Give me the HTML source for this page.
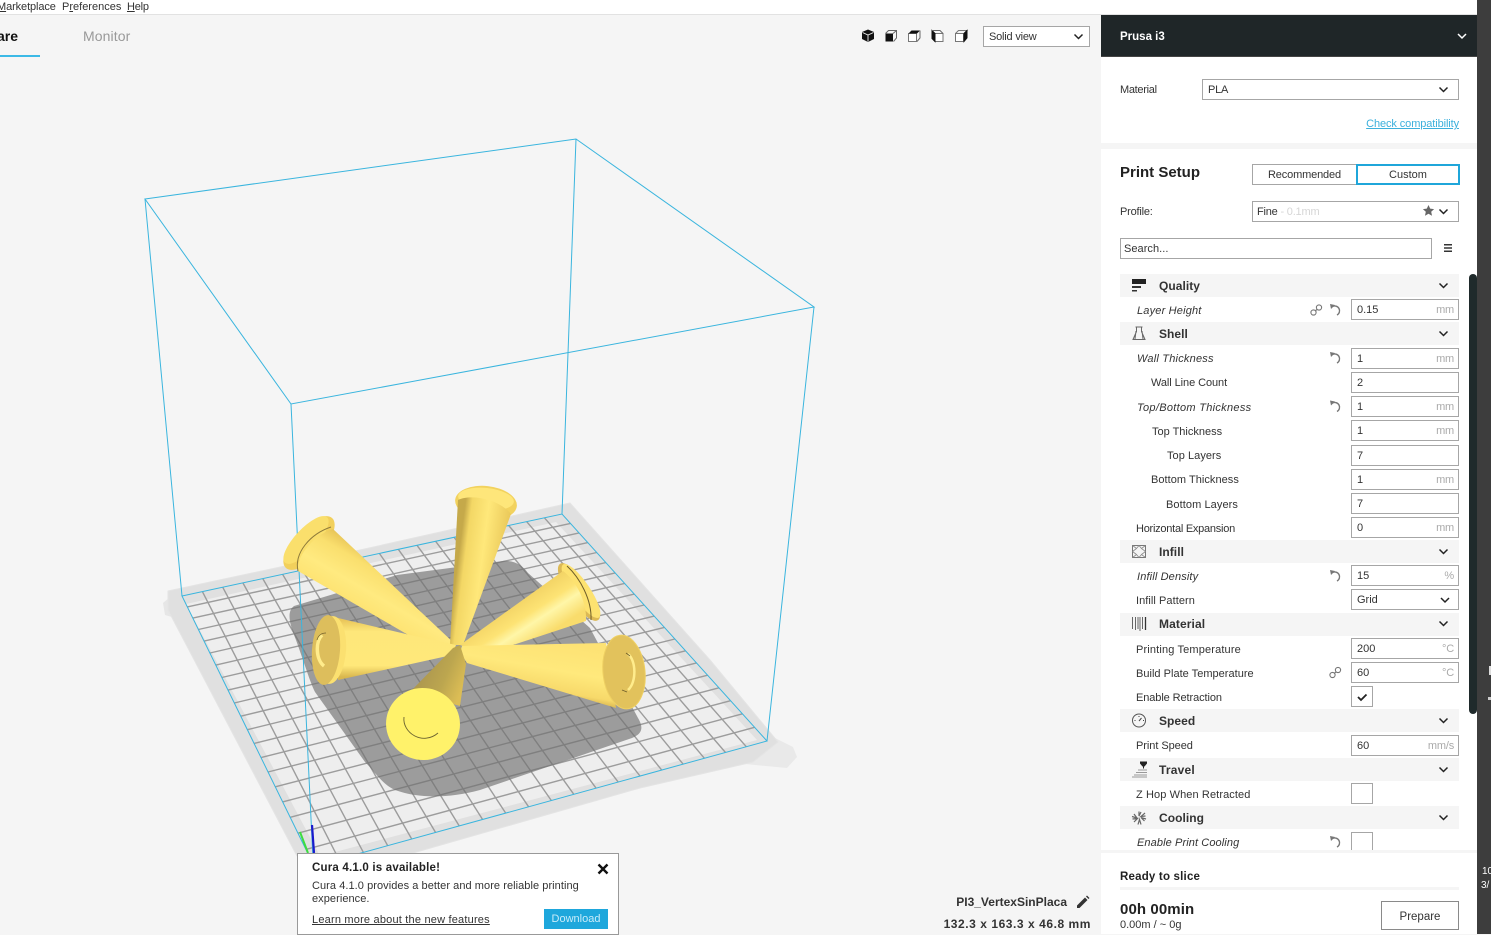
<!DOCTYPE html>
<html><head><meta charset="utf-8"><title>Cura</title>
<style>
html,body{margin:0;padding:0;width:1491px;height:934px;overflow:hidden;background:#f5f5f5;font-family:"Liberation Sans",sans-serif;color:#333}
div,span,svg{position:absolute;box-sizing:border-box}
.t{white-space:nowrap;font-size:11px;line-height:14px;letter-spacing:-.2px}
.l{white-space:nowrap;font-size:11px;line-height:14px;color:#333}
.it{font-style:italic}
.c{left:1120px;width:339px;height:23px;background:#f5f5f5}
.h{left:1159px;white-space:nowrap;font-size:12px;line-height:14px;font-weight:bold;color:#333;letter-spacing:.05px}
.i{left:1351px;width:108px;height:21px;border:1px solid #a6a6a6;background:#fff;font-size:11px;line-height:21px;padding-left:5px;color:#333}
.u{right:4px;top:0;color:#aaa;font-size:11px;line-height:21px;letter-spacing:-.2px}
.b{border:1px solid #a6a6a6;background:#fff}
</style></head><body>

<!-- viewport -->
<svg id="vp" width="1101" height="934" style="left:0;top:0" viewBox="0 0 1101 934">
<defs>
<linearGradient id="g1" gradientUnits="userSpaceOnUse" x1="372" y1="552" x2="344" y2="600"><stop offset="0" stop-color="#e8c558"/><stop offset=".25" stop-color="#fadf6e"/><stop offset=".65" stop-color="#ffea80"/><stop offset="1" stop-color="#fde372"/></linearGradient>
<linearGradient id="g2" gradientUnits="userSpaceOnUse" x1="458" y1="560" x2="505" y2="566"><stop offset="0" stop-color="#c5a94a"/><stop offset=".14" stop-color="#f3d765"/><stop offset=".5" stop-color="#ffe87a"/><stop offset="1" stop-color="#e9c758"/></linearGradient>
<linearGradient id="g3" gradientUnits="userSpaceOnUse" x1="515" y1="590" x2="545" y2="636"><stop offset="0" stop-color="#ecca5c"/><stop offset=".5" stop-color="#fde374"/><stop offset=".68" stop-color="#fff6a8"/><stop offset="1" stop-color="#f9dc6c"/></linearGradient>
<linearGradient id="g4" gradientUnits="userSpaceOnUse" x1="370" y1="620" x2="370" y2="677"><stop offset="0" stop-color="#e9c65a"/><stop offset=".2" stop-color="#fee77a"/><stop offset=".8" stop-color="#ffe87a"/><stop offset="1" stop-color="#d9b74e"/></linearGradient>
<linearGradient id="g5" gradientUnits="userSpaceOnUse" x1="550" y1="640" x2="540" y2="697"><stop offset="0" stop-color="#fde274"/><stop offset=".5" stop-color="#ffe97c"/><stop offset=".85" stop-color="#f7d96a"/><stop offset="1" stop-color="#d3b04c"/></linearGradient>
<linearGradient id="g6" gradientUnits="userSpaceOnUse" x1="415" y1="670" x2="462" y2="690"><stop offset="0" stop-color="#a8934f"/><stop offset=".6" stop-color="#bca64f"/><stop offset="1" stop-color="#dcbd55"/></linearGradient>
</defs>
<!-- plate -->
<path d="M170 597L163 603 165 615 175 618Z" fill="#e6e6e6"/>
<path d="M773 737L793 747 797 757 787 768 745 764Z" fill="#e9e9e9"/>
<path d="M168 591L360 550 570 503 710 660 778 742 753 762 640 788 413 853 297 856 168 610Z" fill="#e0e0e0" stroke="#e4e4e4" stroke-width="1" stroke-linejoin="round"/>
<path d="M186 604L556 522 757 740 320 856Z" fill="#eeeeee"/>
<g id="grid" stroke="#9c9c9c" stroke-width="1.400" fill="none"></g>
<!-- shadow -->
<path d="M294 606L397 575 503 561C515 560 523 566 528 573L590 628 638 718C644 728 642 734 632 738L480 790C450 798 420 799 395 790 382 784 375 772 365 762L315 692C310 682 305 665 296 640 290 625 286 612 294 606Z" fill="#707070" fill-opacity=".65"/>
<!-- wireframe -->
<g stroke="#3ab5de" stroke-width="1" fill="none">
<path d="M145 199L576 139 814 307 291 404Z"/>
<path d="M145 199L182 596M576 139L562 514M814 307L767 741M291 404L313 860"/>
<path d="M182 596L562 514 767 741 314 866Z"/>
</g>
<path d="M300 832L308 853" stroke="#3fdc3f" stroke-width="2"/>
<path d="M312 825L314 853" stroke="#1a1acc" stroke-width="2.200"/>

<!-- cone 1 upper-left -->
<ellipse cx="309" cy="543" rx="34" ry="15" transform="rotate(-47 309 543)" fill="#f2d05c"/>
<ellipse cx="306" cy="540" rx="31" ry="11" transform="rotate(-47 306 540)" fill="#fadf6c"/>
<path d="M333 529L456 645 452 650 410 636 298 571C295 560 312 535 333 529Z" fill="url(#g1)"/>
<path d="M298 571C294 553 310 534 331 527" stroke="#8d7a3a" stroke-width="1" fill="none"/>
<!-- cone 2 top -->
<ellipse cx="486" cy="503" rx="31" ry="17" transform="rotate(6 486 503)" fill="#f2d25e"/>
<ellipse cx="486" cy="499" rx="28" ry="11" transform="rotate(6 486 499)" fill="#fee67a"/>
<path d="M458 500C470 494 498 498 511 514L463 645 450 645Z" fill="url(#g2)"/>
<!-- cone 3 right-up -->
<ellipse cx="579" cy="592" rx="34" ry="11" transform="rotate(56 579 592)" fill="#dcb955"/>
<ellipse cx="581" cy="591" rx="32" ry="9" transform="rotate(56 581 591)" fill="#fde270"/>
<path d="M563 571C575 580 587 600 586 621L510 646 468 648 460 645Z" fill="url(#g3)"/>
<path d="M567 566C580 578 592 600 591 620" stroke="#6f5e2a" stroke-width="1" fill="none"/>
<!-- cone 4 left -->
<path d="M338 618L410 635 456 645 452 655 338 680Z" fill="url(#g4)"/>
<ellipse cx="331" cy="650" rx="15" ry="34" fill="#fbe070" transform="rotate(4 331 650)"/>
<ellipse cx="326" cy="650" rx="14" ry="35" fill="#ddbe5c" transform="rotate(4 326 650)"/>
<path d="M322 635C315 642 316 660 324 666" stroke="#ffec8c" stroke-width="3.500" fill="none"/>
<path d="M326 633C321 633 318 636 317 640" stroke="#6f5e2a" stroke-width=".8" fill="none"/>
<!-- cone 5 right -->
<path d="M606 643L462 646 460 652 467 663 616 708Z" fill="url(#g5)"/>
<ellipse cx="624" cy="672" rx="21" ry="37" fill="#e2c25c" transform="rotate(-6 624 672)" stroke="#efd062" stroke-width="1"/>
<path d="M628 654C636 660 637 682 628 690" stroke="#ffec8c" stroke-width="2.500" fill="none"/>
<path d="M626 653L630 656M622 690L627 692" stroke="#6f5e2a" stroke-width=".8" fill="none"/>
<!-- cone 6 front -->
<path d="M410 692L453 648 460 645 466 664 460 706Z" fill="url(#g6)"/>
<ellipse cx="423" cy="724" rx="37" ry="36" fill="#fff26a" transform="rotate(10 423 724)"/>
<path d="M404 717C402 733 423 746 438 733" stroke="#6b6330" stroke-width=".9" fill="none"/>
</svg>

<!-- menu -->
<div style="left:0;top:0;width:1477px;height:15px;background:#fff;border-bottom:1px solid #e2e2e2"></div>
<div class="t" style="left:-3px;top:0;letter-spacing:-.1px"><u>M</u>arketplace</div>
<div class="t" style="left:62px;top:0;letter-spacing:0"><span style="position:static">P</span><u>r</u>eferences</div>
<div class="t" style="left:127px;top:0"><u>H</u>elp</div>

<!-- tabs -->
<div style="right:1473px;top:28px;font-size:14px;line-height:17px;font-weight:bold;color:#111;white-space:nowrap">Prepare</div>
<div style="left:0;top:55px;width:40px;height:2px;background:#3cb9e6"></div>
<div style="left:83px;top:28px;font-size:14px;line-height:17px;color:#999;white-space:nowrap;letter-spacing:.1px">Monitor</div>

<!-- view combo -->
<div class="b" style="left:983px;top:26px;width:107px;height:21px"></div>
<div class="t" style="left:989px;top:30px">Solid view</div>

<!-- sidebar -->
<div style="left:1477px;top:0;width:14px;height:934px;background:#3d3d3d"></div>
<div style="left:1101px;top:15px;width:376px;height:128px;background:#fff"></div>
<div style="left:1101px;top:15px;width:376px;height:42px;background:#1f2628;border-bottom:1px solid #444"></div>
<div style="left:1120px;top:30px;color:#fff;font-size:11.500px;line-height:14px;font-weight:bold;white-space:nowrap">Prusa i3</div>
<div style="left:1101px;top:149px;width:376px;height:701px;background:#fff"></div>

<div class="t" style="left:1120px;top:83px;letter-spacing:-.3px">Material</div>
<div class="b" style="left:1202px;top:79px;width:257px;height:21px"></div>
<div class="t" style="left:1208px;top:83px">PLA</div>
<div class="t" style="right:32px;top:117px;color:#3cb0dc;text-decoration:underline;letter-spacing:-.1px">Check compatibility</div>

<div style="left:1120px;top:164px;font-size:15px;line-height:18px;font-weight:bold;color:#222;white-space:nowrap">Print Setup</div>
<div class="b" style="left:1252px;top:164px;width:105px;height:21px;text-align:center;font-size:11px;line-height:20px;color:#333;letter-spacing:-.15px">Recommended</div>
<div class="b" style="left:1356px;top:164px;width:104px;height:21px;border:2px solid #1fa6da;text-align:center;font-size:11px;line-height:18px;color:#333">Custom</div>
<div class="t" style="left:1120px;top:205px">Profile:</div>
<div class="b" style="left:1252px;top:201px;width:207px;height:21px"></div>
<div class="t" style="left:1257px;top:205px">Fine <span style="position:static;color:#d6d6d6">- 0.1mm</span></div>
<div class="b" style="left:1120px;top:238px;width:312px;height:21px"></div>
<div class="t" style="left:1124px;top:242px;letter-spacing:.05px">Search...</div>

<!-- settings -->
<div class="c" style="top:274px"></div><div class="h" style="top:279px">Quality</div>
<div class="l it" style="left:1137px;top:304px;letter-spacing:.18px">Layer Height</div>
<div class="i" style="top:299px">0.15<span class="u">mm</span></div>
<div class="c" style="top:322px"></div><div class="h" style="top:327px">Shell</div>
<div class="l it" style="left:1137px;top:352px;letter-spacing:.21px">Wall Thickness</div>
<div class="i" style="top:348px">1<span class="u">mm</span></div>
<div class="l" style="left:1151px;top:376px;letter-spacing:-.08px">Wall Line Count</div>
<div class="i" style="top:372px">2</div>
<div class="l it" style="left:1137px;top:401px;letter-spacing:.3px">Top/Bottom Thickness</div>
<div class="i" style="top:396px">1<span class="u">mm</span></div>
<div class="l" style="left:1152px;top:425px">Top Thickness</div>
<div class="i" style="top:420px">1<span class="u">mm</span></div>
<div class="l" style="left:1167px;top:449px;letter-spacing:.05px">Top Layers</div>
<div class="i" style="top:445px">7</div>
<div class="l" style="left:1151px;top:473px;letter-spacing:.04px">Bottom Thickness</div>
<div class="i" style="top:469px">1<span class="u">mm</span></div>
<div class="l" style="left:1166px;top:498px;letter-spacing:.08px">Bottom Layers</div>
<div class="i" style="top:493px">7</div>
<div class="l" style="left:1136px;top:522px;letter-spacing:-.25px">Horizontal Expansion</div>
<div class="i" style="top:517px">0<span class="u">mm</span></div>
<div class="c" style="top:540px"></div><div class="h" style="top:545px">Infill</div>
<div class="l it" style="left:1137px;top:570px;letter-spacing:.14px">Infill Density</div>
<div class="i" style="top:565px">15<span class="u">%</span></div>
<div class="l" style="left:1136px;top:594px;letter-spacing:.06px">Infill Pattern</div>
<div class="i" style="top:589px">Grid</div>
<div class="c" style="top:613px"></div><div class="h" style="top:617px;letter-spacing:.1px">Material</div>
<div class="l" style="left:1136px;top:643px;letter-spacing:.15px">Printing Temperature</div>
<div class="i" style="top:638px">200<span class="u">°C</span></div>
<div class="l" style="left:1136px;top:667px;letter-spacing:.02px">Build Plate Temperature</div>
<div class="i" style="top:662px">60<span class="u">°C</span></div>
<div class="l" style="left:1136px;top:691px;letter-spacing:-.09px">Enable Retraction</div>
<div class="i" style="top:686px;width:22px"></div>
<div class="c" style="top:709px"></div><div class="h" style="top:714px">Speed</div>
<div class="l" style="left:1136px;top:739px;letter-spacing:-.06px">Print Speed</div>
<div class="i" style="top:735px">60<span class="u">mm/s</span></div>
<div class="c" style="top:758px"></div><div class="h" style="top:763px;letter-spacing:.2px">Travel</div>
<div class="l" style="left:1136px;top:788px;letter-spacing:.1px">Z Hop When Retracted</div>
<div class="i" style="top:783px;width:22px"></div>
<div class="c" style="top:806px"></div><div class="h" style="top:811px">Cooling</div>
<div class="l it" style="left:1137px;top:836px;letter-spacing:.1px">Enable Print Cooling</div>
<div class="i" style="top:832px;width:22px;height:24px"></div>

<!-- scrollbar -->
<div style="left:1469px;top:274px;width:8px;height:440px;background:#1f2a2b;border-radius:4px"></div>

<!-- icon overlay -->
<svg width="1491" height="934" style="left:0;top:0" viewBox="0 0 1491 934" fill="none">
<!-- chevrons -->
<g stroke="#222" stroke-width="1.500">
<path d="M1074.500 34.500l4 4 4-4M1439.500 87.500l4 4 4-4M1439.500 209.500l4 4 4-4"/>
<path d="M1439.500 283.500l4 4 4-4M1439.500 331.500l4 4 4-4M1439.500 549.500l4 4 4-4M1441 598l4 4 4-4M1439.500 621.500l4 4 4-4M1439.500 718.500l4 4 4-4M1439.500 767.500l4 4 4-4M1439.500 815.500l4 4 4-4"/>
</g>
<path d="M1458 34l4 4 4-4" stroke="#fff" stroke-width="1.500"/>
<!-- star -->
<path d="M1428.500 205l1.700 3.600 3.900.5-2.900 2.700.8 3.900-3.500-2-3.500 2 .8-3.900-2.900-2.700 3.900-.5z" fill="#666"/>
<!-- hamburger -->
<path d="M1444 244.800h8M1444 248h8M1444 251.200h8" stroke="#333" stroke-width="1.500"/>
<!-- view cubes -->
<g>
<path d="M868 29.500l6 2.500v7l-6 3-6-3v-7z" fill="#111"/><path d="M862.500 32.500l5.500 2.500 5.500-2.500M868 35v6.500" stroke="#f5f5f5" stroke-width=".9"/>
<path d="M885.500 33.500h7.500v8h-7.500z" fill="#111"/><path d="M885.500 33.500l3-3h8v7.500l-3 3.500M893 33.500l3.500-3" stroke="#666"/>
<path d="M908.500 33.500h8v8h-8z" fill="#fff" stroke="#777"/><path d="M908.500 33.500l3-3h8.500l-3 3h-8z" fill="#111"/><path d="M920 30.500v7.500l-3 3.500" stroke="#666"/>
<path d="M935 33.500h8v8h-8z" fill="#fff" stroke="#777"/><path d="M932 30.500l3 3v8l-3-3z" fill="#111" stroke="#111"/><path d="M932 30.500h8l3 3" stroke="#666"/>
<path d="M955.500 33.500h8v8h-8z" fill="#fff" stroke="#777"/><path d="M955.500 33.500l3-3h8.500l-3 3" stroke="#777"/><path d="M967 30.500l-3 3v8l3-3.500z" fill="#111" stroke="#111"/>
</g>
<!-- quality icon -->
<path d="M1132 279h14v5h-14z" fill="#222"/><path d="M1132 286h9v2h-9zM1132 290h5v1.500h-5z" fill="#333"/>
<!-- shell icon -->
<path d="M1135.500 327h7M1136.500 327.500v4l-3.500 8h12l-3.500-8v-4M1136 331l-1 8M1142 331l1 8" stroke="#666"/>
<!-- infill icon -->
<path d="M1132.500 545.500h13v12h-13z" stroke="#777"/><path d="M1132.500 545.500l4 3 2.500-3 2.500 3 4-3M1132.500 557.500l4-3 2.500 3 2.500-3 4 3M1136.500 548.500l-4 3 4 3M1141.500 548.500l4 3-4 3" stroke="#888" stroke-width=".8"/>
<!-- material icon -->
<path d="M1132.500 617v12M1135.500 617v13M1138 617v12M1140 617v14M1142.500 617v12" stroke="#666" stroke-width="1"/><path d="M1145.500 617v13" stroke="#333" stroke-width="1.300"/>
<!-- speed icon -->
<circle cx="1139" cy="720.500" r="6.500" stroke="#555"/><path d="M1139 721l2.500-3M1134.500 720.500h1M1143 720.500h1M1139 716v1" stroke="#444"/>
<!-- travel icon -->
<path d="M1140 761.500h7v2l-2.500 3h-2l-2.500-3z" fill="#222"/><path d="M1143.500 766.500v2" stroke="#222"/>
<path d="M1138 770h9M1136 772.500h11M1134 775h13M1132 777h15" stroke="#999" stroke-width="1"/>
<!-- cooling icon -->
<g stroke="#666" stroke-width="1.200"><path d="M1139 811.500v4.500l2-4M1145 813l-4 3.500 4.500-.5M1146 819l-5-1.500 3.500 3.500M1141 824.500l-1.500-5-1.500 5M1134 822l3.500-3.500-5 .5M1132 816.500l5 1.500-3-4"/></g>
<!-- undo icons -->
<g stroke="#777" stroke-width="1.400">
<path d="M1332.500 306.500a4.700 4.700 0 1 1 4.500 8.500"/>
<path d="M1332.500 354.500a4.700 4.700 0 1 1 4.500 8.500"/>
<path d="M1332.500 403a4.700 4.700 0 1 1 4.500 8.500"/>
<path d="M1332.500 572.500a4.700 4.700 0 1 1 4.500 8.500"/>
<path d="M1332.500 838.500a4.700 4.700 0 1 1 4.500 8.500"/>
</g>
<g fill="#777"><path d="M1330 304l5 1-4 4zM1330 352l5 1-4 4zM1330 400.500l5 1-4 4zM1330 570l5 1-4 4zM1330 836l5 1-4 4z"/></g>
<!-- link icons -->
<g stroke="#777" stroke-width="1.100">
<circle cx="1319" cy="307.500" r="2.600"/><circle cx="1313.500" cy="312.500" r="2.600"/><path d="M1317 309.500l-2 1.500"/>
<circle cx="1338" cy="670" r="2.600"/><circle cx="1332.500" cy="675" r="2.600"/><path d="M1336 672l-2 1.500"/>
</g>
<!-- check -->
<path d="M1358 697l3 3 5.500-5.500" stroke="#222" stroke-width="1.800"/>
</svg>

<!-- bottom panel -->
<div style="left:1101px;top:850px;width:376px;height:3px;background:#f5f5f5"></div>
<div style="left:1101px;top:853px;width:376px;height:81px;background:#fff"></div>
<div style="left:1120px;top:870px;font-size:11.500px;line-height:14px;font-weight:bold;color:#222;white-space:nowrap;letter-spacing:.2px">Ready to slice</div>
<div style="left:1120px;top:887px;width:339px;height:3px;background:#f5f5f5"></div>
<div style="left:1120px;top:901px;font-size:15px;line-height:17px;font-weight:bold;color:#222;white-space:nowrap;letter-spacing:.1px">00h 00min</div>
<div class="t" style="left:1120px;top:918px;letter-spacing:0">0.00m / ~ 0g</div>
<div style="left:1381px;top:901px;width:78px;height:29px;border:1px solid #8a8a8a;background:#fff;text-align:center;font-size:11.500px;line-height:30px;color:#333">Prepare</div>

<!-- right edge fragments -->
<div style="left:1482px;top:866px;color:#fff;font-size:10px;line-height:12px;white-space:nowrap">10</div>
<div style="left:1481px;top:880px;color:#fff;font-size:10px;line-height:12px;white-space:nowrap">3/</div>
<div style="left:1489px;top:666px;width:2px;height:9px;background:#ddd"></div>
<div style="left:1488px;top:697px;width:3px;height:3px;background:#ccc"></div>

<!-- object info -->
<div style="right:424px;top:895px;font-size:12px;line-height:14px;font-weight:bold;color:#333;white-space:nowrap">PI3_VertexSinPlaca</div>
<div style="right:400px;top:917px;font-size:12px;line-height:14px;font-weight:bold;color:#333;white-space:nowrap;letter-spacing:.55px">132.3 x 163.3 x 46.8 mm</div>
<svg width="16" height="16" style="left:1075px;top:894px" viewBox="0 0 16 16"><path d="M2 11.500L10 3.500l2.500 2.500-8 8H2zM11 2.500l1-1 2.500 2.500-1 1z" fill="#333"/></svg>

<!-- popup -->
<div style="left:297px;top:853px;width:322px;height:82px;background:#fff;border:1px solid #999"></div>
<div style="left:312px;top:861px;font-size:11.500px;line-height:14px;font-weight:bold;color:#222;white-space:nowrap;letter-spacing:.2px">Cura 4.1.0 is available!</div>
<svg width="12" height="12" style="left:597px;top:863px" viewBox="0 0 12 12"><path d="M1.500 1.500l9 9M10.500 1.500l-9 9" stroke="#111" stroke-width="2.400"/></svg>
<div class="t" style="left:312px;top:879px;letter-spacing:.06px">Cura 4.1.0 provides a better and more reliable printing</div>
<div class="t" style="left:312px;top:892px;letter-spacing:.06px">experience.</div>
<div class="t" style="left:312px;top:913px;text-decoration:underline;letter-spacing:.2px">Learn more about the new features</div>
<div style="left:544px;top:909px;width:64px;height:20px;background:#1ea7dc;color:#c8ecfa;text-align:center;font-size:11px;line-height:21px">Download</div>

<script>
(function(){
var x0=182,y0=596,x1=562,y1=514,x2=767,y2=741,x3=314,y3=866;
var dx1=x1-x2,dx2=x3-x2,sx=x0-x1+x2-x3,dy1=y1-y2,dy2=y3-y2,sy=y0-y1+y2-y3;
var det=dx1*dy2-dx2*dy1;
var g=(sx*dy2-dx2*sy)/det,h=(dx1*sy-sx*dy1)/det;
var a=x1-x0+g*x1,b=x3-x0+h*x3,c=x0,d=y1-y0+g*y1,e=y3-y0+h*y3,f=y0;
function P(u,v){var w=g*u+h*v+1;return ((a*u+b*v+c)/w).toFixed(1)+' '+((d*u+e*v+f)/w).toFixed(1);}
var s='',n=20,i;
for(i=1;i<n;i++){
s+='<path d="M'+P(i/n,0)+'L'+P(i/n,1)+'"></path>';
s+='<path d="M'+P(0,i/n)+'L'+P(1,i/n)+'"></path>';
}
document.getElementById('grid').innerHTML=s;
})();
</script>
</body></html>
